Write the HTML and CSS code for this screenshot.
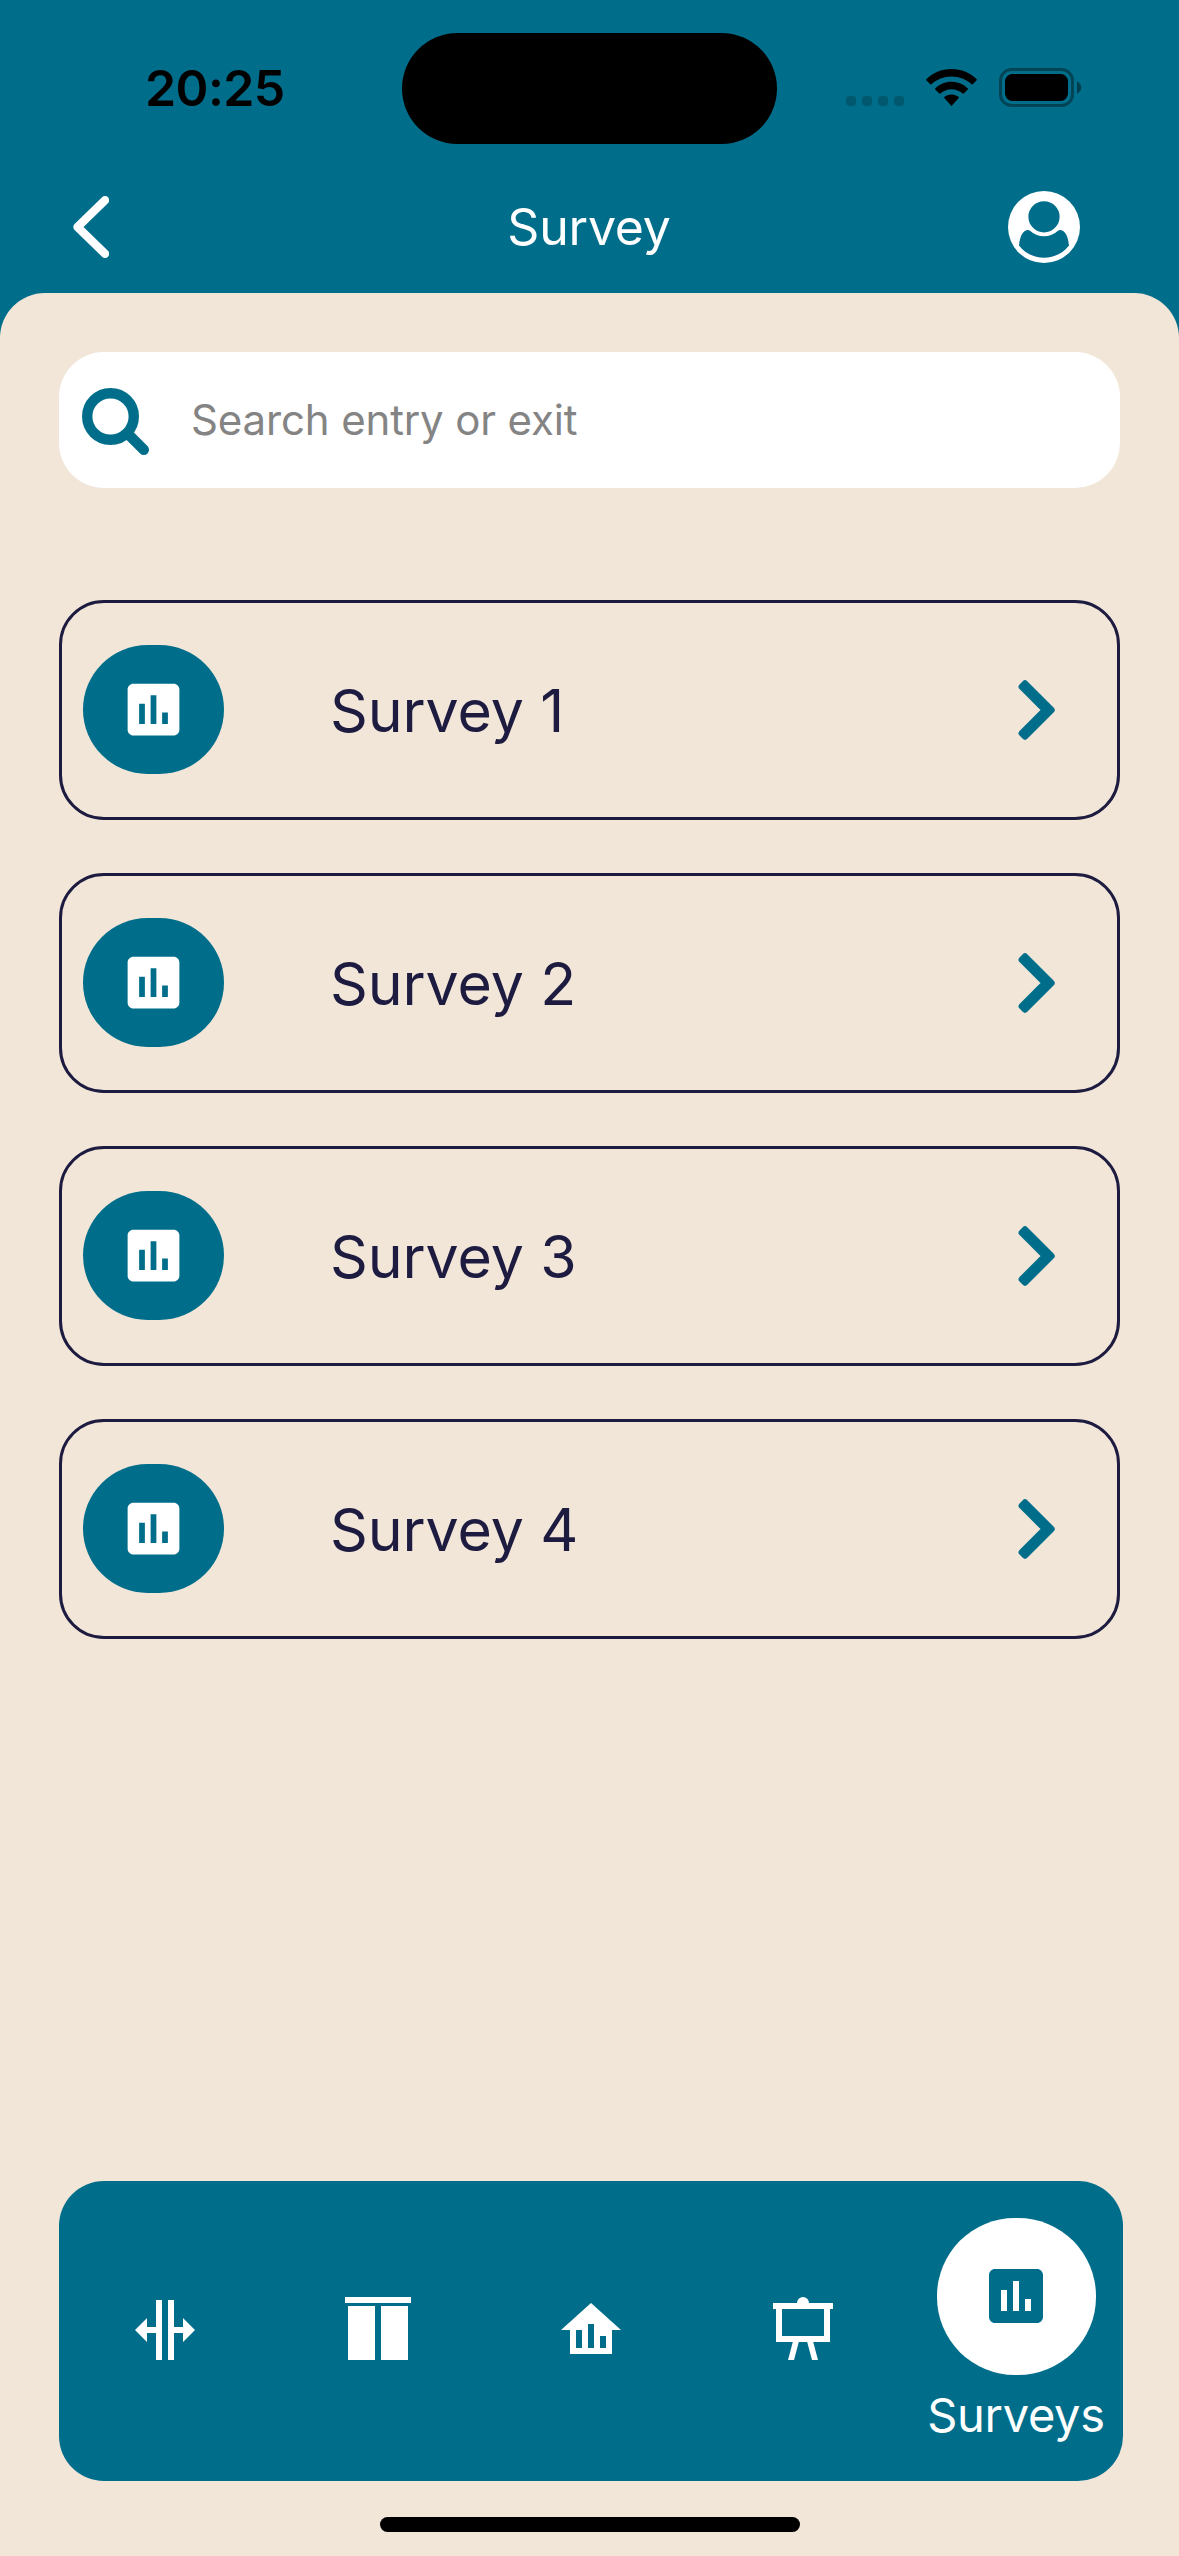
FILE: index.html
```
<!DOCTYPE html>
<html lang="en">
<head>
<meta charset="utf-8">
<title>Survey</title>
<link rel="stylesheet" href="styles.css">
</head>
<body>
<svg class="defs" aria-hidden="true">
  <symbol id="chart" viewBox="0 0 24 24"><path d="M19 3H5c-1.100 0-2 .9-2 2v14c0 1.100.9 2 2 2h14c1.100 0 2-.9 2-2V5c0-1.100-.9-2-2-2zM9 17H7v-7h2v7zm4 0h-2V7h2v10zm4 0h-2v-4h2v4z"/></symbol>
  <symbol id="chevron" viewBox="0 0 37 60"><path d="M7 3.500L33.500 30L7 56.500L3.800 53.300L27 30L3.800 6.700z" stroke="currentColor" stroke-width="6.400" stroke-linejoin="round"/></symbol>
</svg>
<div class="screen">
  <header class="header">
    <div class="status">
      <span class="time">20:25</span>
      <div class="island"></div>
      <div class="indicators">
        <div class="dots"><i></i><i></i><i></i><i></i></div>
        <svg class="wifi" viewBox="0 0 51 37">
          <path d="M25.500 0C35.500 0 44.500 4 50.700 10.200c.3.300.3.700 0 1l-4 4.100c-.3.300-.7.300-1 0C40.300 10.300 33.300 7.500 25.500 7.500S10.700 10.300 5.300 15.300c-.3.300-.7.300-1 0l-4-4.100c-.3-.3-.3-.7 0-1C6.500 4 15.500 0 25.500 0z"/>
          <path d="M25.500 12.800c6.200 0 12 2.500 16.300 6.600.3.300.3.700 0 1l-4.100 4.200c-.3.300-.7.300-1 0-3-2.800-7-4.400-11.200-4.400s-8.200 1.600-11.200 4.400c-.3.300-.7.300-1 0l-4.100-4.200c-.3-.3-.3-.7 0-1 4.300-4.100 10.100-6.600 16.300-6.600z"/>
          <path d="M25.500 25.400c2.800 0 5.300 1 7.200 2.700.3.300.3.700 0 1l-6.700 7.400c-.3.300-.7.300-1 0l-6.700-7.400c-.3-.3-.3-.7 0-1 1.900-1.700 4.400-2.700 7.200-2.700z"/>
        </svg>
        <svg class="battery" viewBox="0 0 83 39">
          <rect x="1.500" y="1.500" width="72" height="36" rx="11" fill="none" stroke="#000" stroke-opacity=".38" stroke-width="3"/>
          <rect x="6" y="6" width="63" height="27" rx="7.500"/>
          <path d="M78 13.500c2.700 1.100 4.200 3.400 4.200 6s-1.500 4.900-4.200 6z" fill-opacity=".45"/>
        </svg>
      </div>
    </div>
    <div class="nav">
      <svg class="back" viewBox="0 0 37 62"><path d="M33 4.300L5.500 31L33 57.700" fill="none" stroke="#fff" stroke-width="8.400" stroke-linecap="round" stroke-linejoin="round"/></svg>
      <h1 class="title">Survey</h1>
      <svg class="profile" viewBox="0 0 72 72">
        <circle cx="36" cy="36" r="36" fill="#fff"/>
        <circle cx="36" cy="25.800" r="15.600"/>
        <path d="M11 54.500C11.800 46 14.500 39.700 19.500 39Q21 38.800 22 39.800C25.600 43.300 30.500 45.300 36 45.300S46.400 43.300 50 39.800Q51 38.800 52.500 39C57.500 39.700 60.200 46 61 54.500C55 62.300 46 66.700 36 66.700S17 62.300 11 54.500z"/>
      </svg>
    </div>
  </header>
  <main class="content">
    <label class="search">
      <svg class="search-icon" viewBox="0 0 68 68"><circle cx="28.500" cy="28.500" r="23.300" fill="none" stroke="currentColor" stroke-width="10.400"/><path d="M46 46L61.800 61.800" stroke="currentColor" stroke-width="10.400" stroke-linecap="round"/></svg>
      <span class="placeholder">Search entry or exit</span>
    </label>
    <div class="list">
      <a class="card"><span class="badge"><svg><use href="#chart"/></svg></span><span class="name">Survey 1</span><svg class="chevron"><use href="#chevron"/></svg></a>
      <a class="card"><span class="badge"><svg><use href="#chart"/></svg></span><span class="name">Survey 2</span><svg class="chevron"><use href="#chevron"/></svg></a>
      <a class="card"><span class="badge"><svg><use href="#chart"/></svg></span><span class="name">Survey 3</span><svg class="chevron"><use href="#chevron"/></svg></a>
      <a class="card"><span class="badge"><svg><use href="#chart"/></svg></span><span class="name">Survey 4</span><svg class="chevron"><use href="#chevron"/></svg></a>
    </div>
    <nav class="tabs">
      <a class="tab"><svg viewBox="0 0 24 24"><path d="M9 2h2v20H9v-9H6v3L2 12l4-4v3h3zM13 2h2v9h3V8l4 4-4 4v-3h-3v9h-2z"/></svg></a>
      <a class="tab"><svg viewBox="0 0 24 24"><path d="M1 1h22v2H1zM2 4h9v18H2zM13 4h9v18h-9z"/></svg></a>
      <a class="tab"><svg viewBox="0 0 24 24"><path d="M12 3L2 12h3v8h14v-8h3zM9 18H7v-6h2zm4 0h-2v-8h2zm4 0h-2v-4h2z"/></svg></a>
      <a class="tab"><svg viewBox="0 0 24 24"><path fill-rule="evenodd" d="M10 3a2 2 0 0 1 4 0h8v2h-1v11h-5.600l1.600 6h-2l-1.600-6h-2.800L9 22H7l1.600-6H3V5H2V3zM5 5v9h14V5z"/></svg></a>
      <a class="tab active"><span class="disc"><svg><use href="#chart"/></svg></span><span class="tab-label">Surveys</span></a>
    </nav>
    <div class="home-bar"></div>
  </main>
</div>
</body>
</html>
```
FILE: styles.css
```
* { box-sizing: border-box; }
body {
  margin: 0;
  background: #006e8b;
  font-family: Inter, "Liberation Sans", sans-serif;
}
svg { display: block; flex: none; }
.defs { width: 0; height: 0; position: absolute; }
.screen {
  width: 1179px;
  height: 2556px;
  display: flex;
  flex-direction: column;
  background: #006e8b;
  overflow: hidden;
}
.header { height: 293px; flex: none; }
.status {
  height: 177px;
  display: grid;
  grid-template-columns: 402px 375px 1fr;
  align-items: start;
}
.time {
  padding: 58px 0 0 145px;
  font-size: 50px;
  line-height: 60px;
  font-weight: 600;
  letter-spacing: -.6px;
}
.island {
  height: 111px;
  margin-top: 33px;
  border-radius: 56px;
  background: #000;
}
.indicators { display: flex; padding: 68px 0 0 69px; }
.dots { display: flex; gap: 6px; padding-top: 28px; }
.dots i {
  width: 10px;
  height: 10px;
  border-radius: 3.5px;
  background: rgba(0, 0, 0, .2);
}
.wifi { width: 51px; height: 37px; margin: 1px 0 0 22px; }
.battery { width: 83px; height: 39px; margin-left: 22px; }
.nav {
  height: 101px;
  display: grid;
  grid-template-columns: 109px 1fr 109px;
  align-items: center;
  padding: 0 0 1px;
}
.back { width: 37px; height: 62px; justify-self: end; }
.title {
  margin: 0;
  padding-right: 1px;
  text-align: center;
  color: #fff;
  font-size: 50px;
  line-height: 60px;
  font-weight: 400;
  letter-spacing: -.2px;
}
.profile { width: 72px; height: 72px; margin-left: -62px; fill: #006e8b; }
.content {
  flex: 1;
  display: flex;
  flex-direction: column;
  padding: 59px 56px 24px 59px;
  border-radius: 45px 45px 0 0;
  background: #f2e6d9;
}
.search {
  width: 1061px;
  height: 136px;
  display: flex;
  align-items: center;
  padding-left: 23px;
  border-radius: 45px;
  background: #fff;
  color: #006e8b;
}
.search-icon { width: 68px; height: 68px; margin-top: 3px; }
.placeholder {
  margin-left: 41px;
  font-size: 42px;
  line-height: 50px;
  letter-spacing: -.15px;
  color: #848484;
}
.list {
  width: 1061px;
  display: grid;
  gap: 53px;
  margin-top: 112px;
}
.card {
  height: 220px;
  display: flex;
  align-items: center;
  padding: 0 62px 0 21px;
  border: 3px solid #1d1b3f;
  border-radius: 45px;
}
.badge {
  width: 141px;
  height: 129px;
  display: grid;
  place-items: center;
  margin-bottom: 1px;
  border-radius: 64.5px;
  background: #006e8b;
}
.badge svg { width: 69px; height: 69px; fill: #fff; }
.name {
  flex: 1;
  margin: 2px 0 0 106px;
  font-size: 59px;
  line-height: 70px;
  letter-spacing: -.1px;
  color: #1d1b3f;
}
.chevron { width: 37px; height: 60px; color: #006e8b; fill: #006e8b; }
.tabs {
  height: 300px;
  display: grid;
  grid-template-columns: 212px 214px 212px 212px 214px;
  margin-top: auto;
  border-radius: 45px;
  background: #006e8b;
}
.tab {
  display: flex;
  flex-direction: column;
  align-items: center;
  padding-top: 113px;
}
.tab svg { width: 72px; height: 72px; fill: #fff; }
.active { padding-top: 37px; }
.disc {
  width: 159px;
  height: 157px;
  display: flex;
  justify-content: center;
  padding: 42px 1px 0 0;
  margin-left: 1px;
  border-radius: 78px;
  background: #fff;
}
.tab .disc svg { fill: #006e8b; }
.tab-label {
  margin-top: 11px;
  color: #fff;
  font-size: 47px;
  line-height: 58px;
  letter-spacing: -.3px;
}
.home-bar {
  width: 420px;
  height: 15px;
  margin: 36px 0 0 321px;
  border-radius: 8px;
  background: #000;
}
```
